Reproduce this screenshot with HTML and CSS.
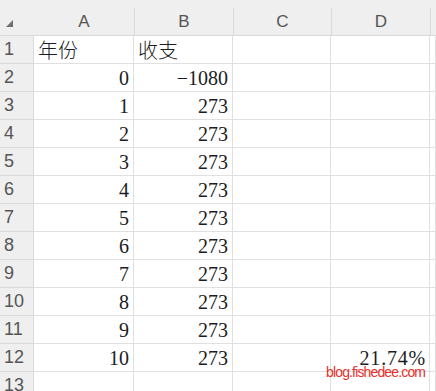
FILE: index.html
```html
<!DOCTYPE html>
<html lang="zh-CN">
<head>
    <meta charset="UTF-8">
    <title>年份 收支</title>
    <link rel="stylesheet" href="styles.css">
</head>
<body>
    <div class="sheet">
        <div class="row head">
            <div class="corner"><span class="tri"></span></div>
            <div class="col">A</div>
            <div class="col">B</div>
            <div class="col">C</div>
            <div class="col">D</div>
            <div class="col"></div>
        </div>
        <div class="row">
            <div class="num">1</div>
            <div class="cell text">年份</div>
            <div class="cell text">收支</div>
            <div class="cell"></div>
            <div class="cell"></div>
            <div class="cell"></div>
        </div>
        <div class="row">
            <div class="num">2</div>
            <div class="cell">0</div>
            <div class="cell">&minus;1080</div>
            <div class="cell"></div>
            <div class="cell"></div>
            <div class="cell"></div>
        </div>
        <div class="row">
            <div class="num">3</div>
            <div class="cell">1</div>
            <div class="cell">273</div>
            <div class="cell"></div>
            <div class="cell"></div>
            <div class="cell"></div>
        </div>
        <div class="row">
            <div class="num">4</div>
            <div class="cell">2</div>
            <div class="cell">273</div>
            <div class="cell"></div>
            <div class="cell"></div>
            <div class="cell"></div>
        </div>
        <div class="row">
            <div class="num">5</div>
            <div class="cell">3</div>
            <div class="cell">273</div>
            <div class="cell"></div>
            <div class="cell"></div>
            <div class="cell"></div>
        </div>
        <div class="row">
            <div class="num">6</div>
            <div class="cell">4</div>
            <div class="cell">273</div>
            <div class="cell"></div>
            <div class="cell"></div>
            <div class="cell"></div>
        </div>
        <div class="row">
            <div class="num">7</div>
            <div class="cell">5</div>
            <div class="cell">273</div>
            <div class="cell"></div>
            <div class="cell"></div>
            <div class="cell"></div>
        </div>
        <div class="row">
            <div class="num">8</div>
            <div class="cell">6</div>
            <div class="cell">273</div>
            <div class="cell"></div>
            <div class="cell"></div>
            <div class="cell"></div>
        </div>
        <div class="row">
            <div class="num">9</div>
            <div class="cell">7</div>
            <div class="cell">273</div>
            <div class="cell"></div>
            <div class="cell"></div>
            <div class="cell"></div>
        </div>
        <div class="row">
            <div class="num">10</div>
            <div class="cell">8</div>
            <div class="cell">273</div>
            <div class="cell"></div>
            <div class="cell"></div>
            <div class="cell"></div>
        </div>
        <div class="row">
            <div class="num">11</div>
            <div class="cell">9</div>
            <div class="cell">273</div>
            <div class="cell"></div>
            <div class="cell"></div>
            <div class="cell"></div>
        </div>
        <div class="row">
            <div class="num">12</div>
            <div class="cell">10</div>
            <div class="cell">273</div>
            <div class="cell"></div>
            <div class="cell pct">21.74%</div>
            <div class="cell"></div>
        </div>
        <div class="row">
            <div class="num">13</div>
            <div class="cell"></div>
            <div class="cell"></div>
            <div class="cell"></div>
            <div class="cell"></div>
            <div class="cell"></div>
        </div>
        <div class="mark">blog.fishedee.com</div>
    </div>
</body>
</html>
```

FILE: styles.css
```css
* {
    box-sizing: border-box;
}
body {
    margin: 0;
    background-color: #ffffff;
    overflow: hidden;
}
.sheet {
    position: relative;
    width: 436px;
    height: 391px;
    padding-top: 8px;
    background-color: #efefef;
    overflow: hidden;
}
.row {
    display: grid;
    grid-template-columns: 34px 100px 99px 98px 99px 1fr;
    height: 28px;
    background-color: #ffffff;
}
.row.head {
    background-color: #efefef;
}
.corner {
    position: relative;
    border-bottom: 1px solid #dadada;
}
.tri {
    position: absolute;
    left: 6px;
    top: 12px;
    width: 0;
    height: 0;
    border-left: 7px solid transparent;
    border-bottom: 7px solid #6f6f6f;
}
.col {
    display: flex;
    align-items: center;
    justify-content: center;
    font-family: "Liberation Sans", Arial, sans-serif;
    font-size: 17px;
    color: #555555;
    border-left: 1px solid #dadada;
    border-bottom: 1px solid #dadada;
}
.col:nth-child(2) {
    border-left: none;
}
.num {
    display: flex;
    align-items: center;
    padding-left: 4px;
    font-family: "Liberation Sans", Arial, sans-serif;
    font-size: 18px;
    color: #555555;
    background-color: #efefef;
    border-right: 1px solid #dadada;
    border-bottom: 1px solid #dadada;
}
.cell {
    display: flex;
    align-items: flex-end;
    justify-content: flex-end;
    padding: 0 4px 2px 0;
    font-family: "Liberation Serif", "Times New Roman", serif;
    font-size: 20px;
    line-height: 22px;
    color: #1c1c24;
    border-right: 1px solid #e0e0e0;
    border-bottom: 1px solid #e0e0e0;
}
.cell.text {
    justify-content: flex-start;
    padding-left: 4px;
    font-family: "Noto Sans CJK SC", sans-serif;
    font-weight: 300;
}
.cell.pct {
    letter-spacing: 0.8px;
    padding-right: 3px;
}
.mark {
    position: absolute;
    left: 326px;
    top: 364px;
    font-family: "Liberation Sans", Arial, sans-serif;
    font-size: 14px;
    line-height: 16px;
    letter-spacing: -0.85px;
    color: #e8302c;
}
```
